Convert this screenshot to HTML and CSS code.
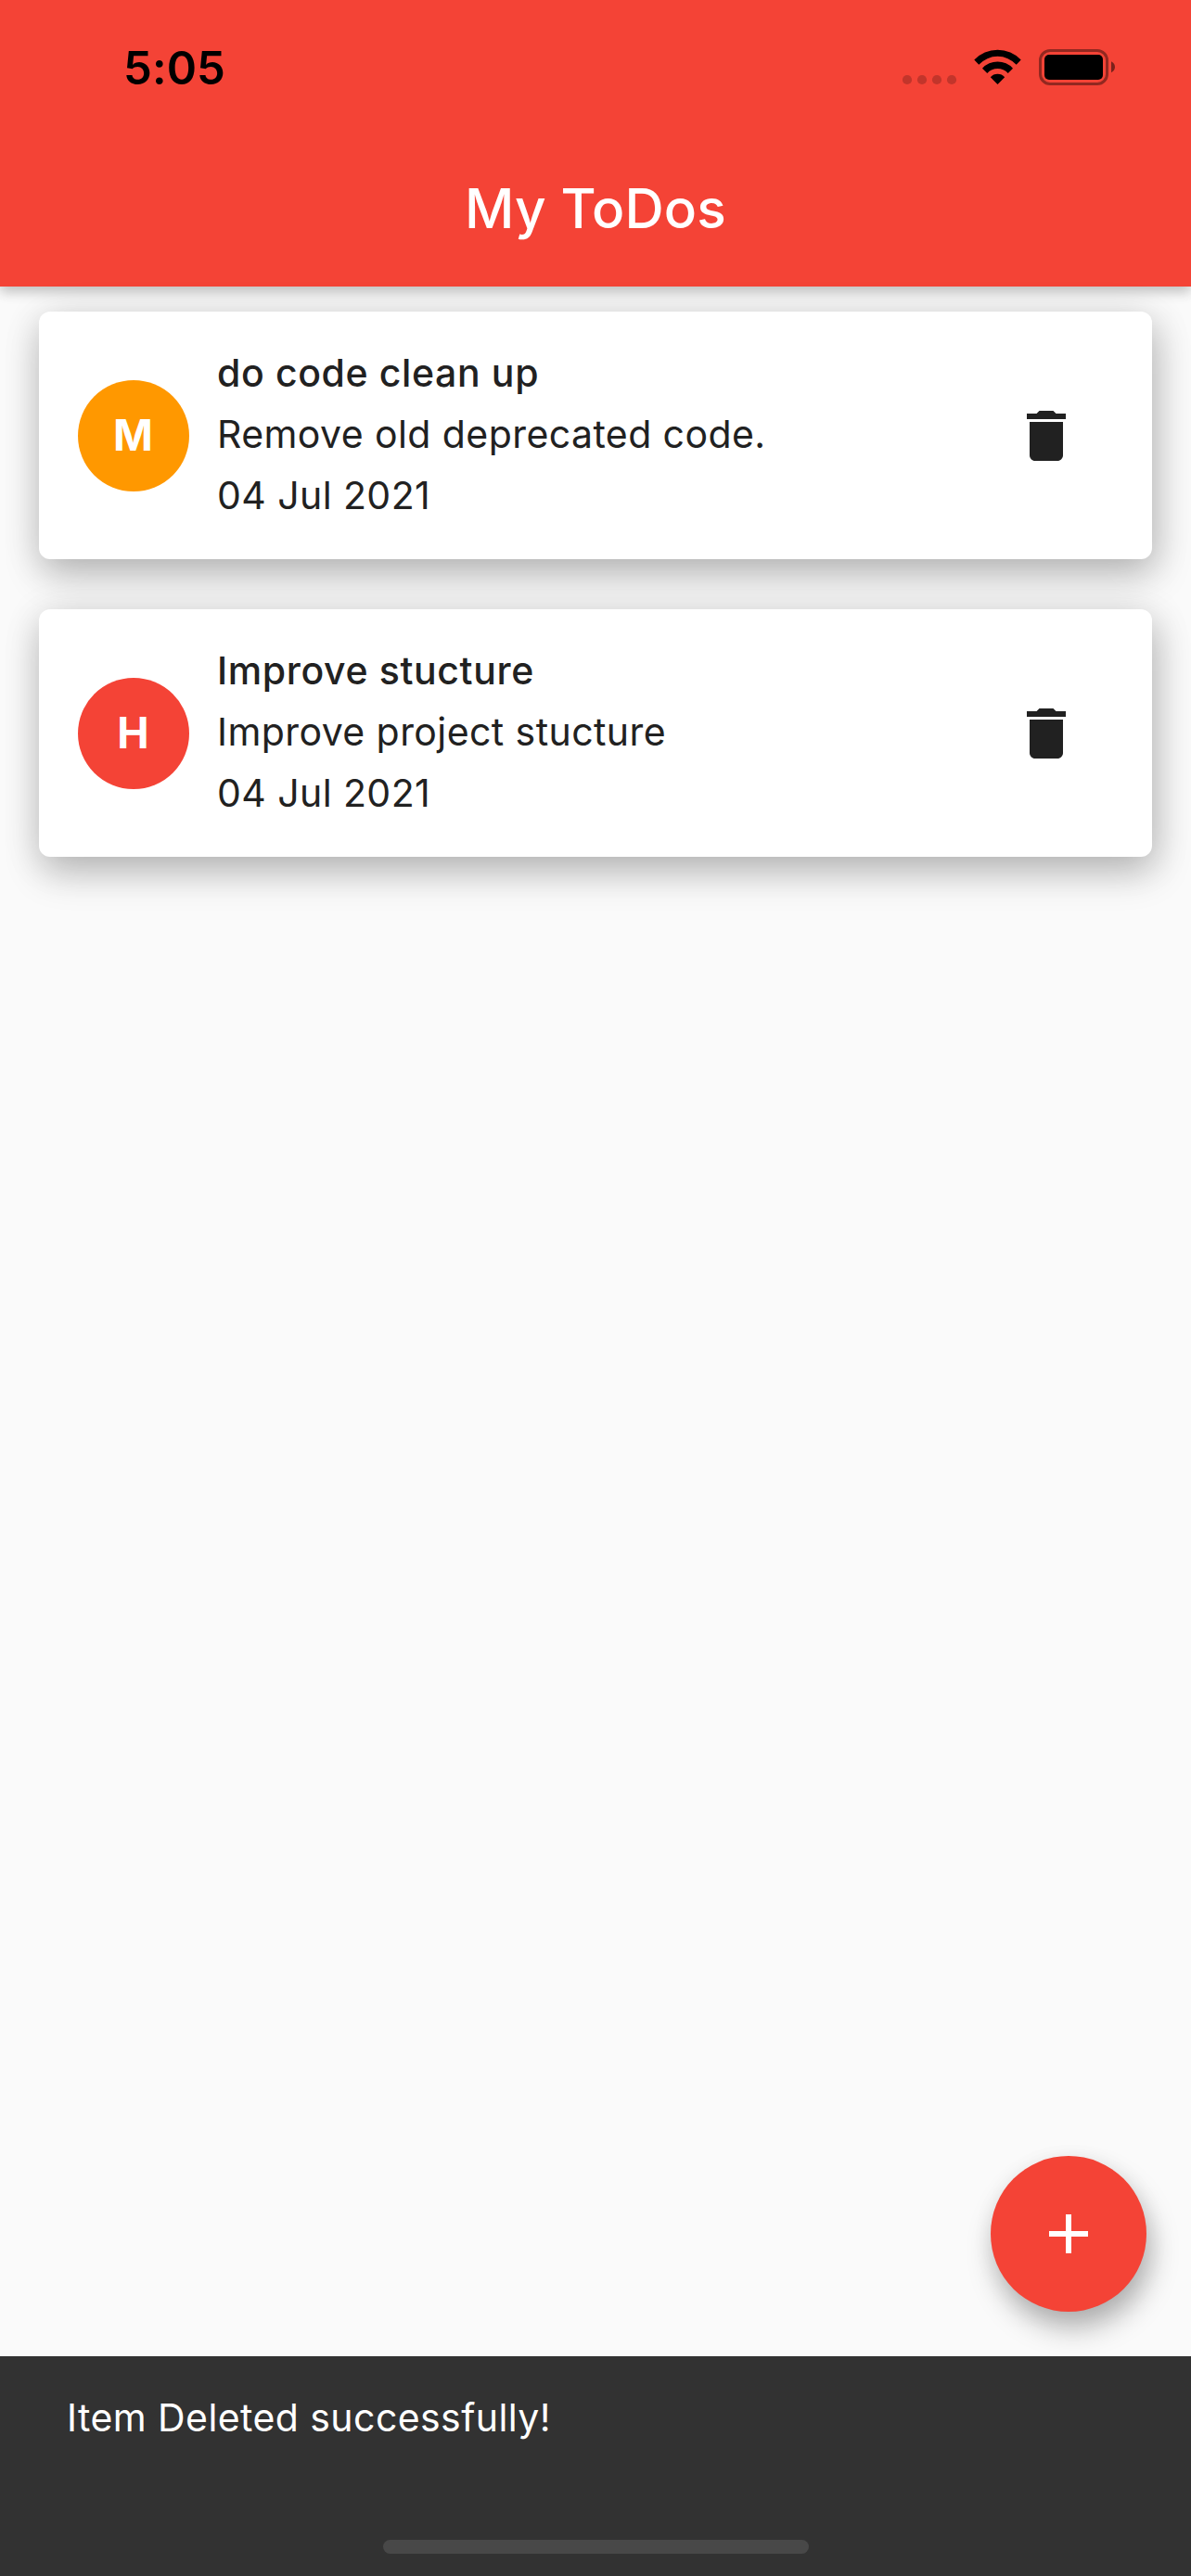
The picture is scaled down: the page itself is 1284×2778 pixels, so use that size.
FILE: index.html
```
<!DOCTYPE html>
<html lang="en">
<head>
<meta charset="utf-8">
<title>My ToDos</title>
<link rel="stylesheet" href="styles.css">
</head>
<body>
<div class="screen">
  <header class="app-bar">
    <div class="status-bar">
      <span class="time">5:05</span>
      <svg class="status-icons" width="229" height="40" viewBox="973 53 229 40" aria-hidden="true">
        <g opacity=".2">
          <circle cx="978" cy="86" r="5.1"/><circle cx="994" cy="86" r="5.1"/>
          <circle cx="1010" cy="86" r="5.1"/><circle cx="1026" cy="86" r="5.1"/>
        </g>
        <path d="M1050.3 64.5A34.8 34.8 0 0 1 1100.7 64.5L1095.7 69.8A27.3 27.3 0 0 0 1055.3 69.8Z"/>
        <path d="M1059 73.7A22.3 22.3 0 0 1 1092 73.7L1086.7 79A15 15 0 0 0 1064.3 79Z"/>
        <path d="M1067.8 83.2A10.3 10.3 0 0 1 1083.2 83.2L1075.5 91Z"/>
        <rect x="1121.5" y="54.5" width="72" height="36" rx="10.5" fill="none" stroke="#000" stroke-width="3" opacity=".4"/>
        <rect x="1126" y="59" width="63" height="27" rx="5"/>
        <path d="M1198 66.3Q1202 68.4 1202 72.3Q1202 76.2 1198 78.3Z" opacity=".5"/>
      </svg>
    </div>
    <h1 class="title">My ToDos</h1>
  </header>

  <main class="list">
    <article class="card">
      <div class="avatar medium">M</div>
      <div class="info">
        <div class="name">do code clean up</div>
        <div>Remove old deprecated code.</div>
        <div>04 Jul 2021</div>
      </div>
      <svg class="trash" viewBox="0 0 24 24" aria-hidden="true"><path d="M6 19c0 1.1.9 2 2 2h8c1.1 0 2-.9 2-2V7H6v12zM19 4h-3.5l-1-1h-5l-1 1H5v2h14V4z"/></svg>
    </article>
    <article class="card">
      <div class="avatar high">H</div>
      <div class="info">
        <div class="name">Improve stucture</div>
        <div>Improve project stucture</div>
        <div>04 Jul 2021</div>
      </div>
      <svg class="trash" viewBox="0 0 24 24" aria-hidden="true"><path d="M6 19c0 1.1.9 2 2 2h8c1.1 0 2-.9 2-2V7H6v12zM19 4h-3.5l-1-1h-5l-1 1H5v2h14V4z"/></svg>
    </article>
  </main>

  <div class="fab">
    <svg width="72" height="72" viewBox="0 0 24 24" fill="#fff" aria-hidden="true"><path d="M19 13h-6v6h-2v-6H5v-2h6V5h2v6h6v2z"/></svg>
  </div>

  <footer class="snackbar">
    <div class="message">Item Deleted successfully!</div>
    <div class="home-indicator"></div>
  </footer>
</div>
</body>
</html>
```
FILE: styles.css
```
* { box-sizing: border-box; }

body {
  margin: 0;
  background: #fafafa;
  font-family: Inter, "Liberation Sans", sans-serif;
}

.screen {
  display: flex;
  flex-direction: column;
  width: 1284px;
  height: 2778px;
  overflow: hidden;
  background: #fafafa;
}

.app-bar {
  flex: none;
  height: 309px;
  background: #f44336;
  box-shadow: 0 6px 12px rgba(0, 0, 0, .2), 0 3px 20px rgba(0, 0, 0, .05);
}

.status-bar {
  display: flex;
  justify-content: space-between;
  height: 141px;
  padding: 53px 82px 0 133px;
}

.time {
  font-size: 49px;
  font-weight: 600;
  letter-spacing: .1px;
  line-height: 42px;
}

.status-icons { display: block; }

.title {
  margin: 0;
  color: #fff;
  font-size: 58.5px;
  font-weight: 500;
  letter-spacing: .1px;
  line-height: 168px;
  text-align: center;
}

.list {
  flex: 1;
  display: flex;
  flex-direction: column;
  gap: 54px;
  padding: 27px 42px;
}

.card {
  display: flex;
  align-items: center;
  height: 267px;
  padding: 0 78px 0 42px;
  background: #fff;
  border-radius: 12px;
  box-shadow: 3px 18px 42px rgba(0, 0, 0, .2), 2px 6px 42px rgba(0, 0, 0, .14);
}

.avatar {
  display: flex;
  align-items: center;
  justify-content: center;
  width: 120px;
  height: 120px;
  margin-right: 30px;
  padding: 0 1px 1px 0;
  border-radius: 50%;
  color: #fff;
  font-size: 46px;
  font-weight: 700;
  line-height: 56px;
}

.medium { background: #ff9800; }
.high { background: #f44336; }

.info {
  flex: 1;
  padding-bottom: 3px;
  color: #212121;
  font-size: 41px;
  letter-spacing: .42px;
  line-height: 66px;
}

.name {
  font-weight: 500;
  letter-spacing: .62px;
}

.trash {
  width: 72px;
  height: 72px;
  fill: #212121;
}

.fab {
  flex: none;
  align-self: flex-end;
  display: flex;
  align-items: center;
  justify-content: center;
  width: 168px;
  height: 168px;
  margin: 0 48px 48px 0;
  border-radius: 50%;
  background: #f44336;
  box-shadow: 5px 18px 30px rgba(0, 0, 0, .27), 2px 6px 24px rgba(0, 0, 0, .07);
}

.snackbar {
  flex: none;
  display: flex;
  flex-direction: column;
  align-items: center;
  justify-content: space-between;
  height: 237px;
  padding: 42px 72px 24px;
  background: #323232;
}

.message {
  align-self: stretch;
  color: #fff;
  font-size: 41px;
  letter-spacing: .42px;
  line-height: 48px;
}

.home-indicator {
  width: 459px;
  height: 15px;
  border-radius: 8px;
  background: #484848;
}
```
